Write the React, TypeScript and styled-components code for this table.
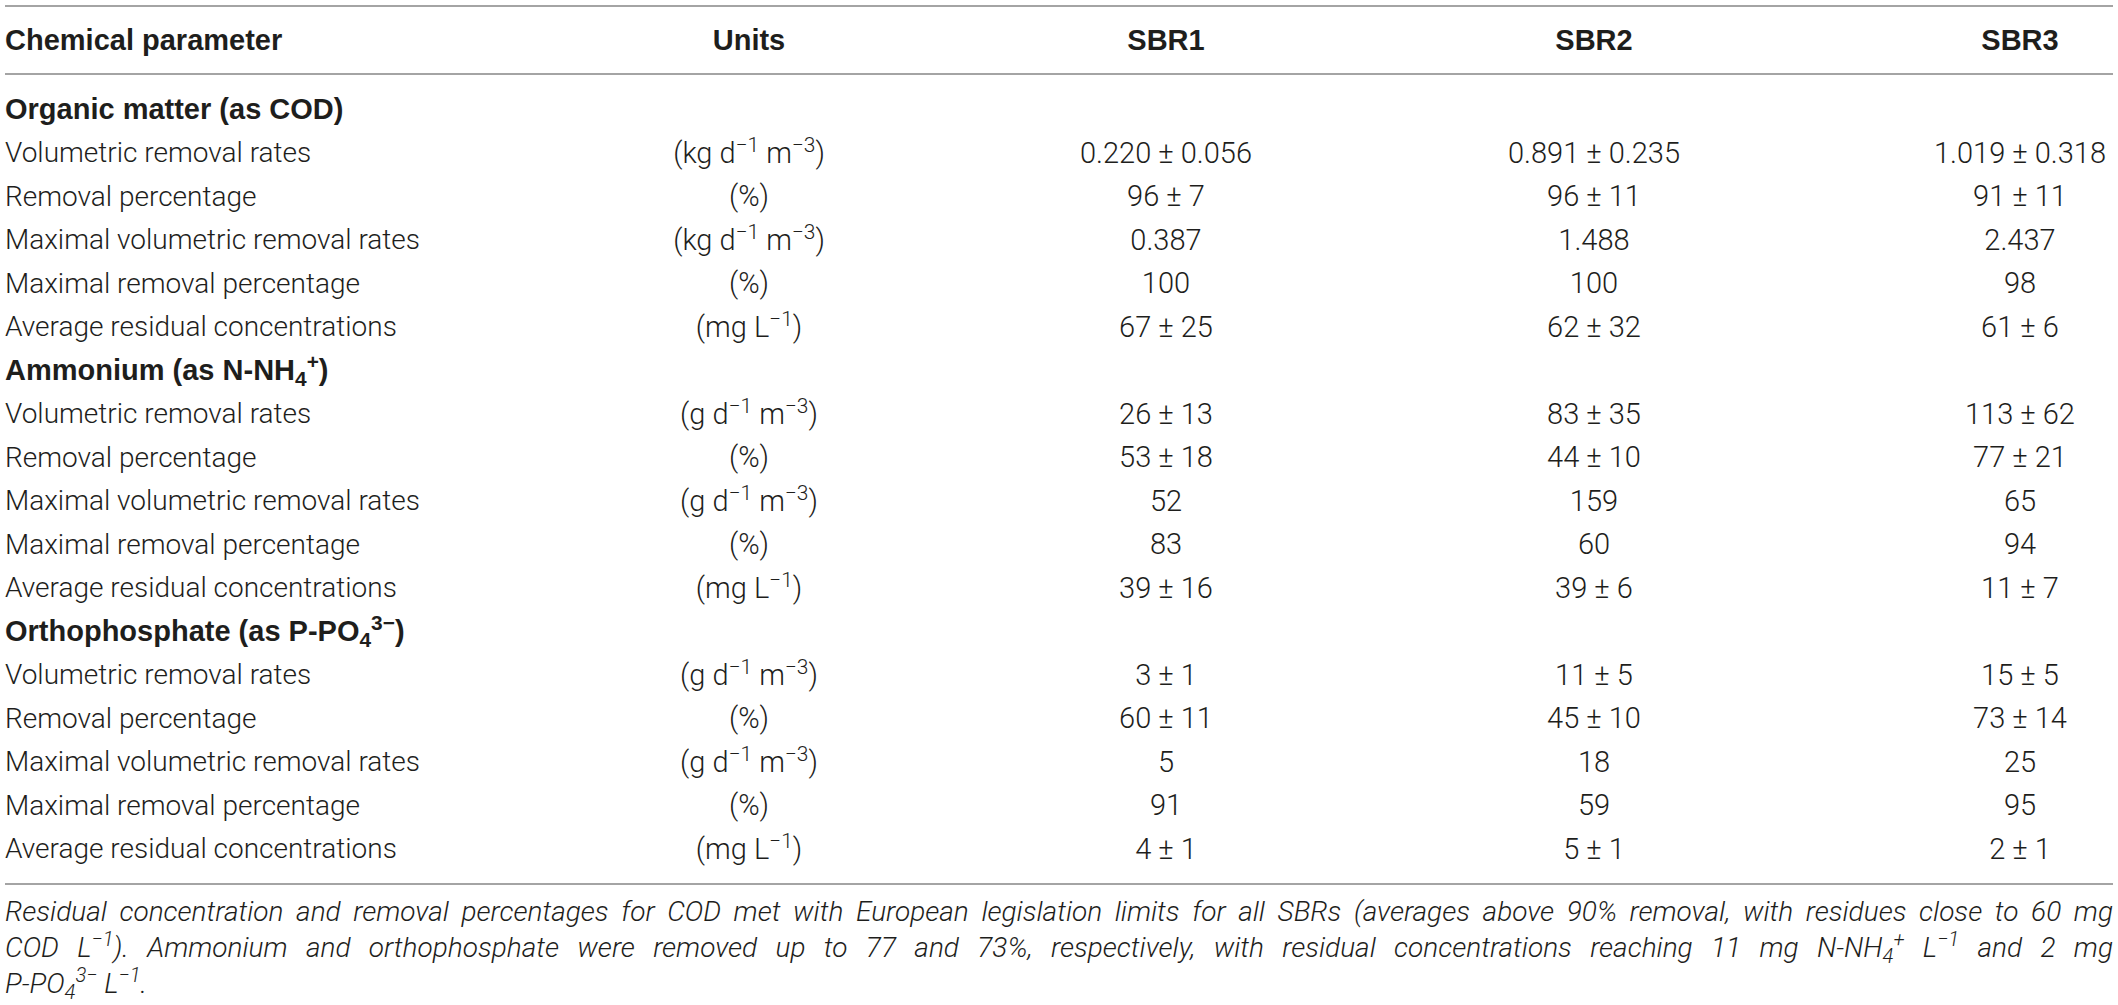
import React from 'react';
import styled, { createGlobalStyle } from 'styled-components';

const COLUMNS = '531px 426px 408px 448px 295px';
const RULE = '2px solid #a4a4a4';

const GlobalStyle = createGlobalStyle`
  body {
    margin: 0;
    background: #ffffff;
    color: #1e1e1c;
    font-family: Roboto, "Liberation Sans", sans-serif;
  }
`;

const Page = styled.div`
  width: 2108px;
  padding: 5px 5px 0;
`;

const Table = styled.div`
  border-top: ${RULE};
`;

const HeaderRow = styled.div`
  display: grid;
  grid-template-columns: ${COLUMNS};
  align-items: center;
  height: 66px;
  border-bottom: ${RULE};
  font-family: "Liberation Sans", Arial, sans-serif;
  font-weight: 700;
  font-size: 29px;
`;

const Body = styled.div`
  padding: 13px 0 12px;
  border-bottom: ${RULE};
`;

const Row = styled.div`
  display: grid;
  grid-template-columns: ${COLUMNS};
  align-items: center;
  height: 43.5px;
  font-weight: 300;
  font-size: 29px;
`;

const Cell = styled.div<{ $col: number }>`
  text-align: ${({ $col }) => ($col === 0 ? 'left' : 'center')};
  padding-left: ${({ $col }) => ($col === 4 ? '109px' : '0')};
  white-space: nowrap;
  line-height: 1;
`;

const Label = styled(Cell)`
  font-size: 28px;
`;

const GroupLabel = styled.div`
  grid-column: 1 / -1;
  font-family: "Liberation Sans", Arial, sans-serif;
  font-weight: 700;
  font-size: 29px;
  line-height: 1;
`;

const Sup = styled.sup`
  font-size: 0.72em;
  line-height: 0;
  vertical-align: 0.55em;
`;

const Sub = styled.sub`
  font-size: 0.72em;
  line-height: 0;
  vertical-align: -0.28em;
`;

const Caption = styled.div`
  margin-top: 9px;
  font-style: italic;
  font-weight: 300;
  font-size: 28px;
  line-height: 36px;
`;

const CaptionLine = styled.div<{ $last?: boolean }>`
  text-align: justify;
  text-align-last: ${({ $last }) => ($last ? 'left' : 'justify')};
`;

type UnitKind = 'kgVol' | 'gVol' | 'pct' | 'mgL';

const Unit: React.FC<{ kind: UnitKind }> = ({ kind }) => {
  if (kind === 'pct') return <>(%)</>;
  if (kind === 'mgL')
    return (
      <>
        (mg L<Sup>−1</Sup>)
      </>
    );
  return (
    <>
      ({kind === 'kgVol' ? 'kg' : 'g'} d<Sup>−1</Sup> m<Sup>−3</Sup>)
    </>
  );
};

interface DataRow {
  label: string;
  unit: UnitKind;
  values: [string, string, string];
}

interface Group {
  title: React.ReactNode;
  rows: DataRow[];
}

const groups: Group[] = [
  {
    title: 'Organic matter (as COD)',
    rows: [
      { label: 'Volumetric removal rates', unit: 'kgVol', values: ['0.220 ± 0.056', '0.891 ± 0.235', '1.019 ± 0.318'] },
      { label: 'Removal percentage', unit: 'pct', values: ['96 ± 7', '96 ± 11', '91 ± 11'] },
      { label: 'Maximal volumetric removal rates', unit: 'kgVol', values: ['0.387', '1.488', '2.437'] },
      { label: 'Maximal removal percentage', unit: 'pct', values: ['100', '100', '98'] },
      { label: 'Average residual concentrations', unit: 'mgL', values: ['67 ± 25', '62 ± 32', '61 ± 6'] },
    ],
  },
  {
    title: (
      <>
        Ammonium (as N-NH<Sub>4</Sub>
        <Sup>+</Sup>)
      </>
    ),
    rows: [
      { label: 'Volumetric removal rates', unit: 'gVol', values: ['26 ± 13', '83 ± 35', '113 ± 62'] },
      { label: 'Removal percentage', unit: 'pct', values: ['53 ± 18', '44 ± 10', '77 ± 21'] },
      { label: 'Maximal volumetric removal rates', unit: 'gVol', values: ['52', '159', '65'] },
      { label: 'Maximal removal percentage', unit: 'pct', values: ['83', '60', '94'] },
      { label: 'Average residual concentrations', unit: 'mgL', values: ['39 ± 16', '39 ± 6', '11 ± 7'] },
    ],
  },
  {
    title: (
      <>
        Orthophosphate (as P-PO<Sub>4</Sub>
        <Sup>3−</Sup>)
      </>
    ),
    rows: [
      { label: 'Volumetric removal rates', unit: 'gVol', values: ['3 ± 1', '11 ± 5', '15 ± 5'] },
      { label: 'Removal percentage', unit: 'pct', values: ['60 ± 11', '45 ± 10', '73 ± 14'] },
      { label: 'Maximal volumetric removal rates', unit: 'gVol', values: ['5', '18', '25'] },
      { label: 'Maximal removal percentage', unit: 'pct', values: ['91', '59', '95'] },
      { label: 'Average residual concentrations', unit: 'mgL', values: ['4 ± 1', '5 ± 1', '2 ± 1'] },
    ],
  },
];

const headers = ['Chemical parameter', 'Units', 'SBR1', 'SBR2', 'SBR3'];

const App: React.FC = () => {
  return (
    <Page>
      <GlobalStyle />
      <Table>
        <HeaderRow>
          {headers.map((h, i) => (
            <Cell key={h} $col={i}>
              {h}
            </Cell>
          ))}
        </HeaderRow>
        <Body>
          {groups.map((group, gi) => (
            <React.Fragment key={gi}>
              <Row>
                <GroupLabel>{group.title}</GroupLabel>
              </Row>
              {group.rows.map((row, ri) => (
                <Row key={ri}>
                  <Label $col={0}>{row.label}</Label>
                  <Cell $col={1}>
                    <Unit kind={row.unit} />
                  </Cell>
                  {row.values.map((v, vi) => (
                    <Cell key={vi} $col={vi + 2}>
                      {v}
                    </Cell>
                  ))}
                </Row>
              ))}
            </React.Fragment>
          ))}
        </Body>
      </Table>
      <Caption>
        <CaptionLine>
          Residual concentration and removal percentages for COD met with European legislation limits for all SBRs
          (averages above 90% removal, with residues close to 60 mg
        </CaptionLine>
        <CaptionLine>
          COD L<Sup>−1</Sup>). Ammonium and orthophosphate were removed up to 77 and 73%, respectively, with residual
          concentrations reaching 11 mg N-NH<Sub>4</Sub>
          <Sup>+</Sup> L<Sup>−1</Sup> and 2 mg
        </CaptionLine>
        <CaptionLine $last>
          P-PO<Sub>4</Sub>
          <Sup>3−</Sup> L<Sup>−1</Sup>.
        </CaptionLine>
      </Caption>
    </Page>
  );
};

export default App;
